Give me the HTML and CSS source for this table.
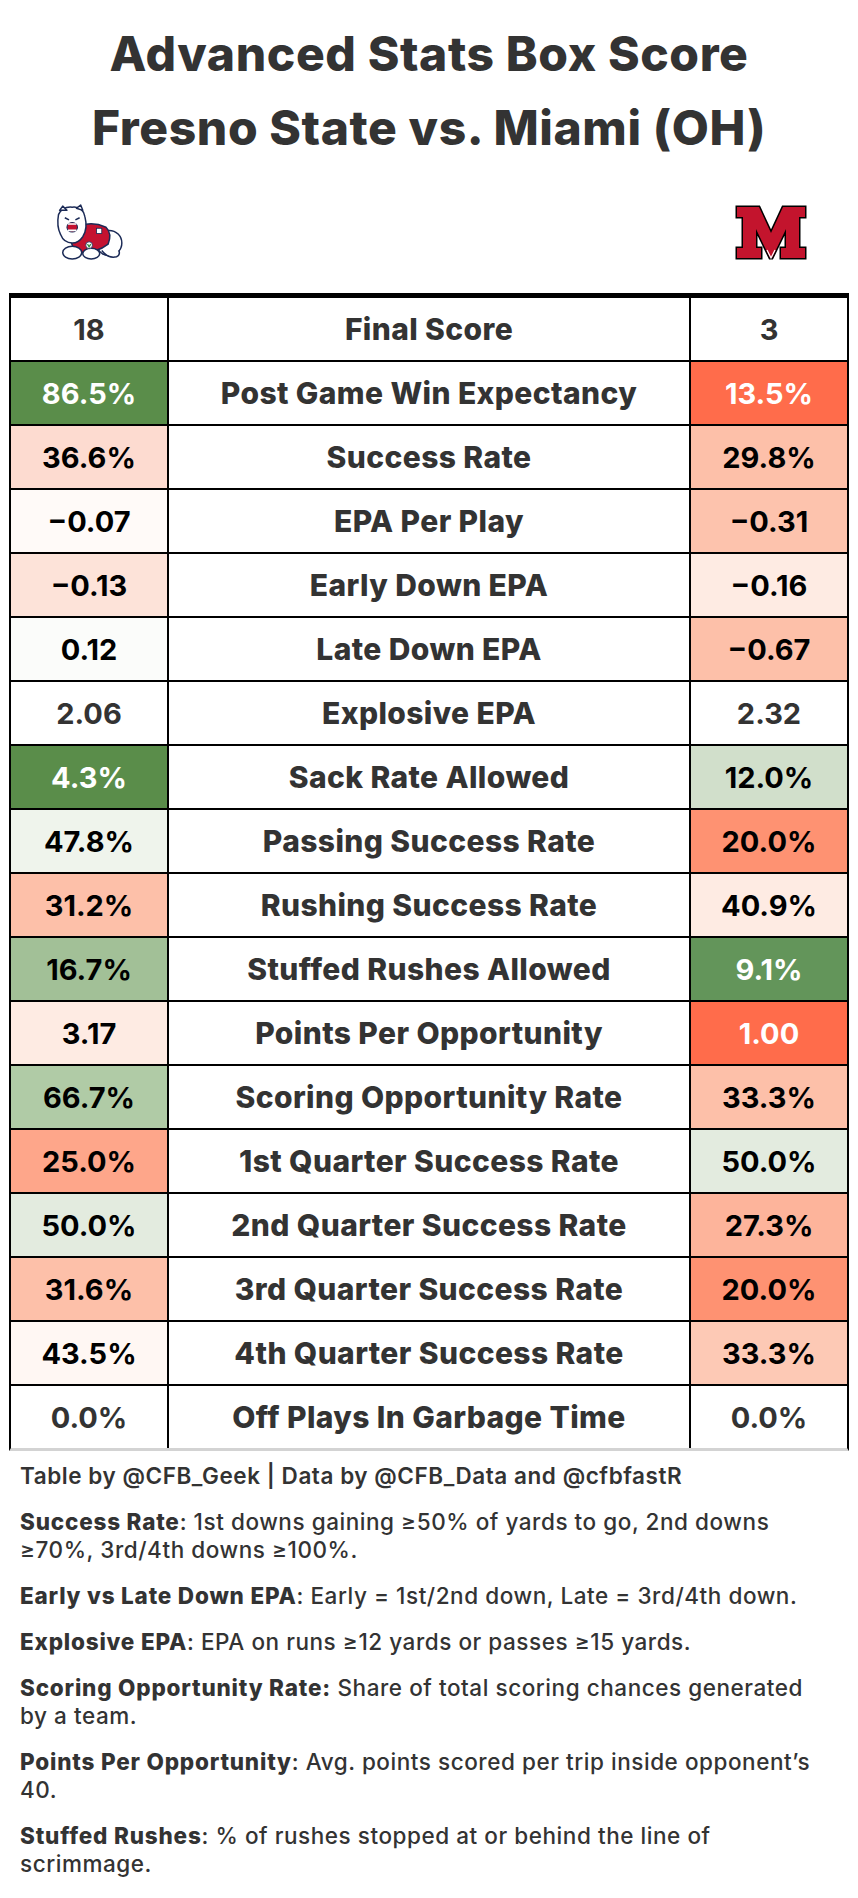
FILE: index.html
```html
<!DOCTYPE html>
<html lang="en">
<head>
<meta charset="utf-8">
<title>Advanced Stats Box Score</title>
<link rel="stylesheet" href="styles.css">
</head>
<body>
<header class="title">
  <h1>Advanced Stats Box Score</h1>
  <h1>Fresno State vs. Miami (OH)</h1>
</header>

<div class="logos">
  <svg class="logo-fresno" viewBox="0 0 72 54" width="76" height="57" aria-label="Fresno State Bulldogs">
    <g stroke="#1b2a56" stroke-width="1.4" stroke-linejoin="round">
      <ellipse cx="57" cy="37" rx="12" ry="12" fill="#fff"/>
      <path d="M50 44 q6 8 14 6 q4 -2 2 -6" fill="#fff"/>
      <path d="M20 26 q16 -12 34 -4 q6 6 2 16 q-10 8 -26 8 q-10 -2 -10 -20z" fill="#c41230"/>
      <ellipse cx="22" cy="46" rx="9" ry="6" fill="#fff"/>
      <ellipse cx="40" cy="47" rx="8" ry="5" fill="#fff"/>
      <path d="M9 10 q4 -8 13 -7 q10 -1 12 9 q3 11 -2 19 q-4 6 -10 6 q-8 0 -11 -8 q-4 -8 -2 -19z" fill="#fff"/>
      <path d="M10 6 l3 -4 l4 4z" fill="#fff"/>
      <path d="M26 4 l4 -3 l2 5z" fill="#fff"/>
    </g>
    <ellipse cx="22" cy="22" rx="5" ry="4.5" fill="#c41230" stroke="#1b2a56" stroke-width="1"/>
    <path d="M18 19 h8 M18 25 h8" stroke="#fff" stroke-width="1.5"/>
    <path d="M15 13 l4 2 M25 15 l4 -2" stroke="#1b2a56" stroke-width="1.4"/>
    <circle cx="38" cy="39" r="3.2" fill="#fff" stroke="#1b2a56" stroke-width="0.8"/>
    <path d="M36.5 38 l1.5 2.5 l1.5 -2.5" stroke="#2c8c3c" stroke-width="1.2" fill="none"/>
    <rect x="45" y="23" width="5" height="5" fill="#fff" stroke="#1b2a56" stroke-width="0.8"/>
  </svg>
  <svg class="logo-miami" viewBox="0 0 74 57" width="74" height="57" aria-label="Miami RedHawks">
    <path d="M3 3 H25 L37 29 L49 3 H71 V13 H65 V44 H71 V54 H47 V44 H52 V25 L38 54 H36 L22 25 V44 H27 V54 H3 V44 H9 V13 H3 Z"
      fill="#c3142d" stroke="#000" stroke-width="3" stroke-linejoin="miter" paint-order="stroke"/>
    <path d="M33 46 L37 54 L41 46" fill="none" stroke="#fff" stroke-width="1.2"/>
  </svg>
</div>

<div class="table">
  <div class="row">
    <div class="cell val plain">18</div>
    <div class="cell label">Final Score</div>
    <div class="cell val plain">3</div>
  </div>
  <div class="row">
    <div class="cell val dark g-dark">86.5%</div>
    <div class="cell label">Post Game Win Expectancy</div>
    <div class="cell val dark r-dark">13.5%</div>
  </div>
  <div class="row">
    <div class="cell val r-1">36.6%</div>
    <div class="cell label">Success Rate</div>
    <div class="cell val r-3">29.8%</div>
  </div>
  <div class="row">
    <div class="cell val r-0">&minus;0.07</div>
    <div class="cell label">EPA Per Play</div>
    <div class="cell val r-3b">&minus;0.31</div>
  </div>
  <div class="row">
    <div class="cell val r-1b">&minus;0.13</div>
    <div class="cell label">Early Down EPA</div>
    <div class="cell val r-05">&minus;0.16</div>
  </div>
  <div class="row">
    <div class="cell val g-0">0.12</div>
    <div class="cell label">Late Down EPA</div>
    <div class="cell val r-3">&minus;0.67</div>
  </div>
  <div class="row">
    <div class="cell val plain">2.06</div>
    <div class="cell label">Explosive EPA</div>
    <div class="cell val plain">2.32</div>
  </div>
  <div class="row">
    <div class="cell val dark g-dark">4.3%</div>
    <div class="cell label">Sack Rate Allowed</div>
    <div class="cell val g-2">12.0%</div>
  </div>
  <div class="row">
    <div class="cell val g-1">47.8%</div>
    <div class="cell label">Passing Success Rate</div>
    <div class="cell val r-5">20.0%</div>
  </div>
  <div class="row">
    <div class="cell val r-3">31.2%</div>
    <div class="cell label">Rushing Success Rate</div>
    <div class="cell val r-05">40.9%</div>
  </div>
  <div class="row">
    <div class="cell val g-4">16.7%</div>
    <div class="cell label">Stuffed Rushes Allowed</div>
    <div class="cell val dark g-dark2">9.1%</div>
  </div>
  <div class="row">
    <div class="cell val r-05">3.17</div>
    <div class="cell label">Points Per Opportunity</div>
    <div class="cell val dark r-dark">1.00</div>
  </div>
  <div class="row">
    <div class="cell val g-3">66.7%</div>
    <div class="cell label">Scoring Opportunity Rate</div>
    <div class="cell val r-3">33.3%</div>
  </div>
  <div class="row">
    <div class="cell val r-4">25.0%</div>
    <div class="cell label">1st Quarter Success Rate</div>
    <div class="cell val g-15">50.0%</div>
  </div>
  <div class="row">
    <div class="cell val g-15">50.0%</div>
    <div class="cell label">2nd Quarter Success Rate</div>
    <div class="cell val r-35">27.3%</div>
  </div>
  <div class="row">
    <div class="cell val r-3">31.6%</div>
    <div class="cell label">3rd Quarter Success Rate</div>
    <div class="cell val r-5">20.0%</div>
  </div>
  <div class="row">
    <div class="cell val r-0b">43.5%</div>
    <div class="cell label">4th Quarter Success Rate</div>
    <div class="cell val r-2">33.3%</div>
  </div>
  <div class="row">
    <div class="cell val plain">0.0%</div>
    <div class="cell label">Off Plays In Garbage Time</div>
    <div class="cell val plain">0.0%</div>
  </div>
</div>

<footer class="notes">
  <p class="credit">Table by @CFB_Geek | Data by @CFB_Data and @cfbfastR</p>
  <p><b>Success Rate</b>: 1st downs gaining ≥50% of yards to go, 2nd downs<br>≥70%, 3rd/4th downs ≥100%.</p>
  <p><b>Early vs Late Down EPA</b>: Early = 1st/2nd down, Late = 3rd/4th down.</p>
  <p><b>Explosive EPA</b>: EPA on runs ≥12 yards or passes ≥15 yards.</p>
  <p><b>Scoring Opportunity Rate:</b> Share of total scoring chances generated<br>by a team.</p>
  <p><b>Points Per Opportunity</b>: Avg. points scored per trip inside opponent’s<br>40.</p>
  <p><b>Stuffed Rushes</b>: % of rushes stopped at or behind the line of<br>scrimmage.</p>
</footer>
</body>
</html>
```

FILE: styles.css
```css
* { box-sizing: border-box; }

body {
  margin: 0;
  background: #fff;
  font-family: Inter, "Liberation Sans", Arial, sans-serif;
  color: #333;
}

.title {
  padding-top: 17px;
  text-align: center;
}

.title h1 {
  margin: 0;
  font-size: 48px;
  line-height: 74px;
  font-weight: 800;
  letter-spacing: 0.6px;
  color: #333;
}

.logos {
  height: 128px;
  padding: 38px 50px 0 49px;
  display: flex;
  justify-content: space-between;
  align-items: flex-start;
}

.logo-fresno { display: block; margin-top: 1px; }
.logo-miami { display: block; margin-top: 1px; }

.table {
  width: 840px;
  margin-left: 9px;
  border-top: 5px solid #000;
  border-left: 2px solid #000;
  border-right: 2px solid #000;
  border-bottom: 3px solid #d3d3d3;
}

.row {
  display: flex;
  height: 64px;
  border-bottom: 2px solid #000;
}

.row:last-child {
  height: 62px;
  border-bottom: none;
}

.cell {
  display: flex;
  align-items: center;
  justify-content: center;
  font-size: 29px;
  font-weight: 700;
  white-space: nowrap;
}

.val {
  width: 156px;
  flex: none;
  color: #000;
}

.label {
  width: 524px;
  flex: none;
  border-left: 2px solid #000;
  border-right: 2px solid #000;
  color: #333;
  font-size: 30px;
  font-weight: 800;
  letter-spacing: 0.4px;
}

.val.plain { color: #333; background: #fff; }
.val.dark { color: #fff; }

.g-dark { background: #5a8d4a; }
.g-dark2 { background: #63955a; }
.g-4 { background: #a2c097; }
.g-3 { background: #b0cba6; }
.g-2 { background: #d1dfcb; }
.g-15 { background: #e3ebdf; }
.g-1 { background: #eff4ec; }
.g-0 { background: #fbfcfa; }

.r-dark { background: #ff6c4b; }
.r-5 { background: #fe9272; }
.r-4 { background: #fea68a; }
.r-35 { background: #fdb49b; }
.r-3 { background: #fdc0a9; }
.r-3b { background: #fdc3ad; }
.r-2 { background: #fdc9b5; }
.r-1 { background: #fddbd0; }
.r-1b { background: #fde3d9; }
.r-05 { background: #feebe3; }
.r-0b { background: #fff7f3; }
.r-0 { background: #fffaf8; }

.notes {
  padding: 11px 0 0 20px;
  font-size: 22.5px;
  line-height: 28px;
  font-weight: 500;
  letter-spacing: 0.55px;
  color: #333;
}

.notes p {
  margin: 0 0 18px;
  white-space: nowrap;
}

.notes b { font-weight: 800; letter-spacing: 0.8px; }

.notes .credit { font-weight: 600; }
```
